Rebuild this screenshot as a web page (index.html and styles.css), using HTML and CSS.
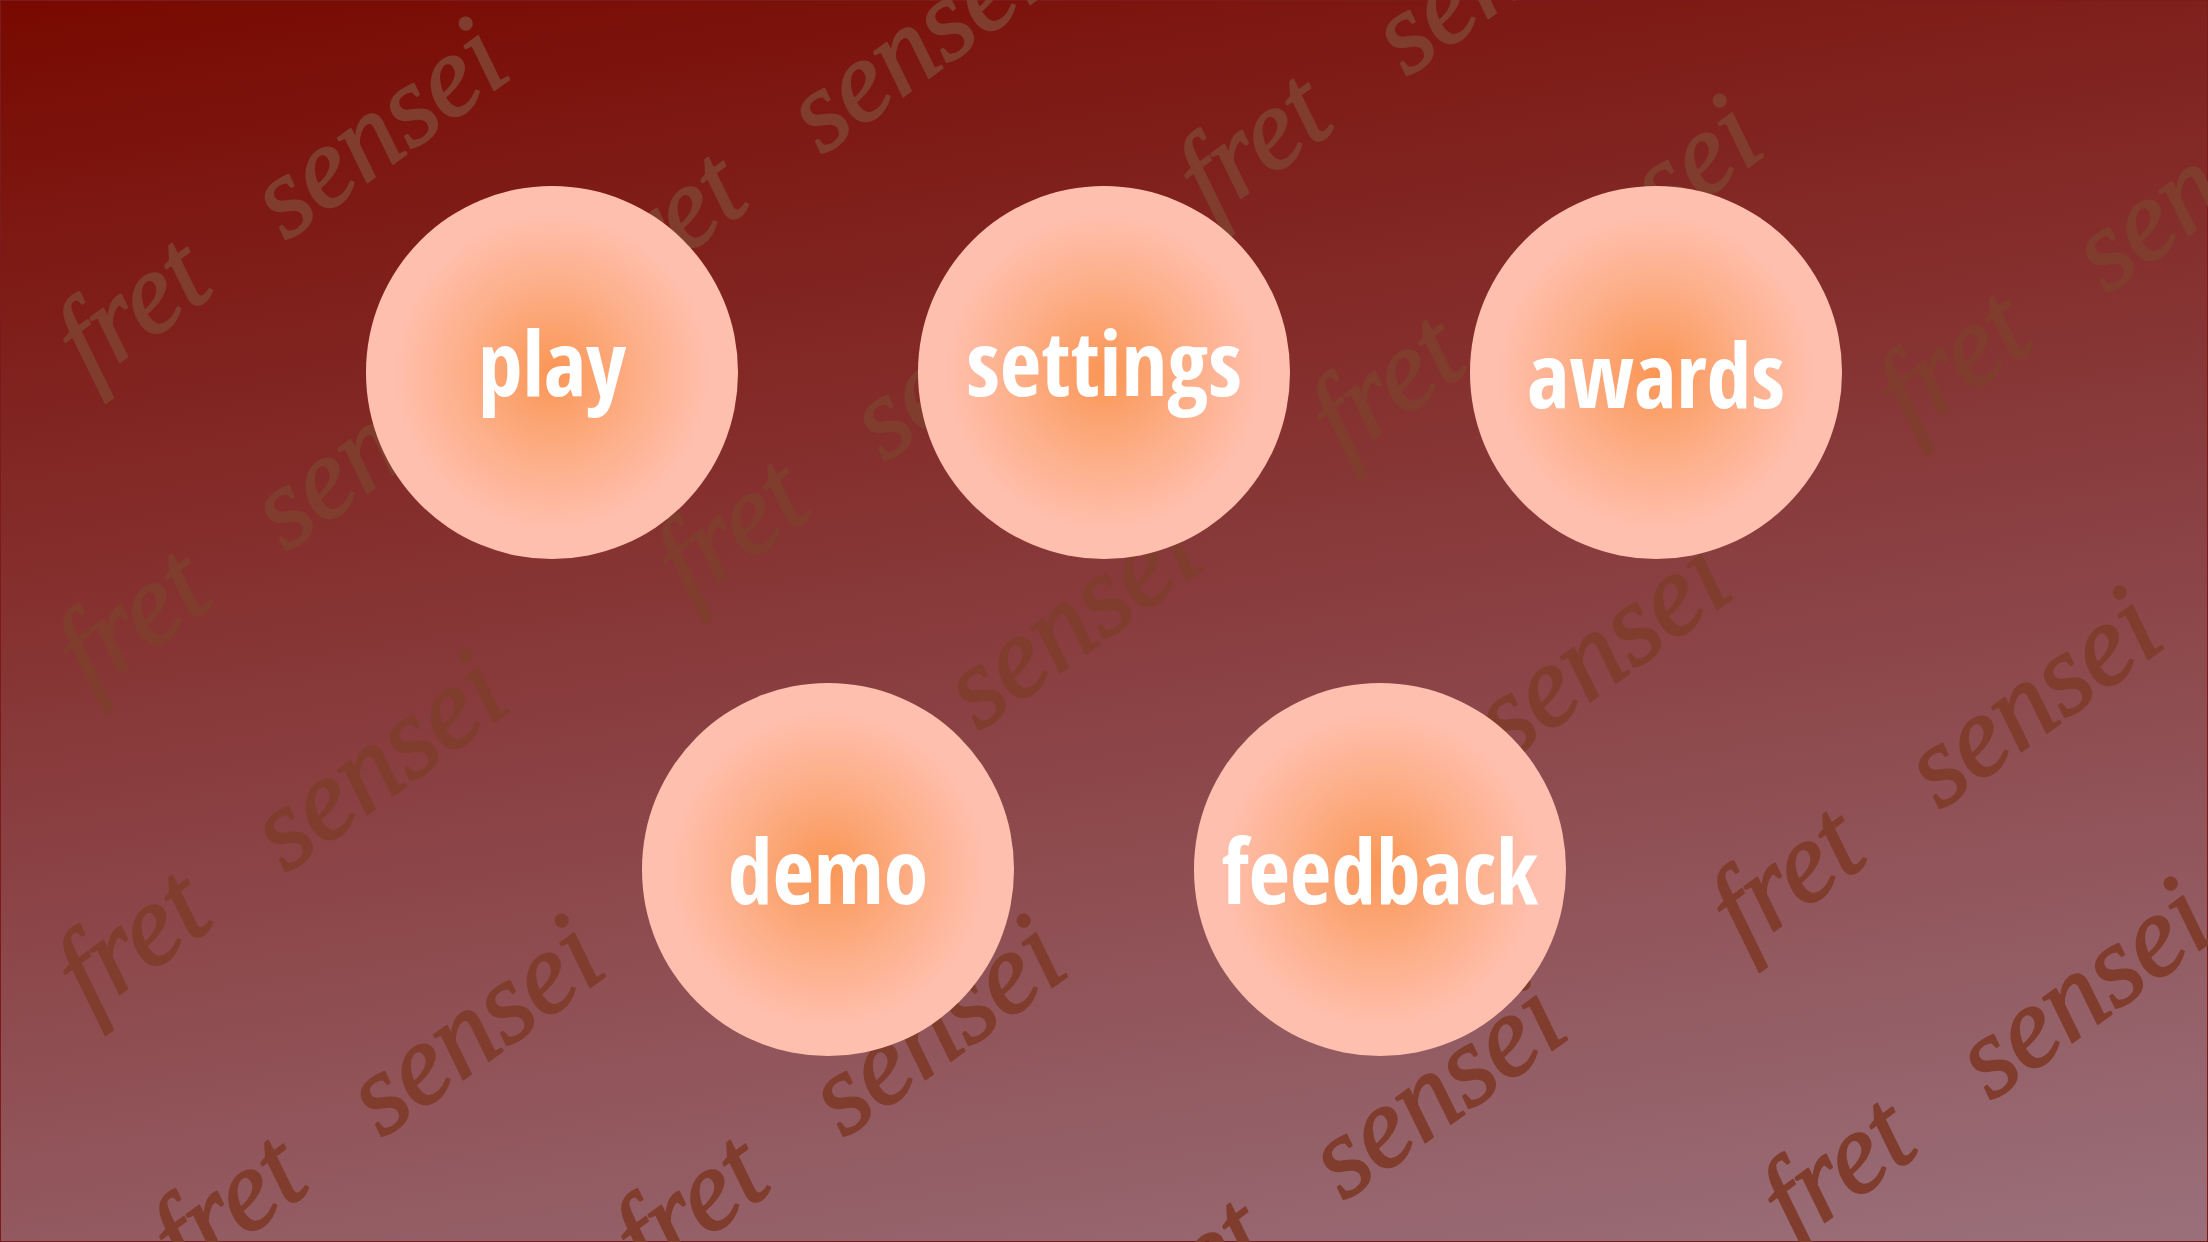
FILE: index.html
```html
<!DOCTYPE html>
<html lang="en">
<head>
<meta charset="utf-8">
<title>fret sensei</title>
<link rel="stylesheet" href="styles.css">
</head>
<body>
<svg class="backdrop" viewBox="0 0 2208 1242" preserveAspectRatio="xMidYMid slice" aria-hidden="true">
  <text transform="translate(90 384) rotate(-36)">fret<tspan x="242">sensei</tspan></text>
  <text transform="translate(626 298) rotate(-36)">fret<tspan x="242">sensei</tspan></text>
  <text transform="translate(1211 220) rotate(-36)">fret<tspan x="242">sensei</tspan></text>
  <text transform="translate(1344 461) rotate(-36)">fret<tspan x="242">sensei</tspan></text>
  <text transform="translate(1911 437) rotate(-36)">fret<tspan x="242">sensei</tspan></text>
  <text transform="translate(90 695) rotate(-36)">fret<tspan x="242">sensei</tspan></text>
  <text transform="translate(689 605) rotate(-36)">fret<tspan x="242">sensei</tspan></text>
  <text transform="translate(90 1016) rotate(-36)">fret<tspan x="242">sensei</tspan></text>
  <text transform="translate(783 874) rotate(-36)">fret<tspan x="242">sensei</tspan></text>
  <text transform="translate(1313 903) rotate(-36)">fret<tspan x="242">sensei</tspan></text>
  <text transform="translate(186 1281) rotate(-36)">fret<tspan x="242">sensei</tspan></text>
  <text transform="translate(648 1281) rotate(-36)">fret<tspan x="242">sensei</tspan></text>
  <text transform="translate(1148 1344) rotate(-36)">fret<tspan x="242">sensei</tspan></text>
  <text transform="translate(1744 953) rotate(-36)">fret<tspan x="242">sensei</tspan></text>
  <text transform="translate(1795 1244) rotate(-36)">fret<tspan x="242">sensei</tspan></text>
</svg>
<main class="menu">
  <div class="row">
    <button class="circle descending" type="button">play</button>
    <button class="circle descending" type="button">settings</button>
    <button class="circle" type="button">awards</button>
  </div>
  <div class="row">
    <button class="circle" type="button">demo</button>
    <button class="circle" type="button">feedback</button>
  </div>
</main>
</body>
</html>
```
FILE: styles.css
```css
* {
  box-sizing: border-box;
}

body {
  margin: 0;
  min-height: 100vh;
  overflow: hidden;
  border: 1px solid #7b1c1a;
  background: linear-gradient(171deg, #780900, #9a707b) border-box;
}

.backdrop {
  position: absolute;
  inset: 0;
  width: 100%;
  height: 100%;
  fill: #803d2d;
  stroke: #803d2d;
  stroke-width: 2px;
  stroke-linejoin: round;
  font: italic 116px "Liberation Serif", serif;
}

.menu {
  position: relative;
  display: flex;
  flex-direction: column;
  justify-content: center;
  gap: 10vh;
  min-height: calc(100vh - 2px);
}

.row {
  display: flex;
  justify-content: center;
  gap: calc(25vw - 30vh);
}

.circle {
  width: 30vh;
  height: 30vh;
  padding: 0;
  border: 0;
  border-radius: 50%;
  background: radial-gradient(closest-side, #fa9655, #fdb08b 50%, #ffbfae 85%);
  color: #fff;
  font: bold 90px/1 "Open Sans Condensed", "Noto Sans Condensed", "Roboto Condensed", Lato, sans-serif;
  font-variant-ligatures: none;
  white-space: nowrap;
  cursor: pointer;
}

.descending {
  padding-bottom: 24px;
}
```
